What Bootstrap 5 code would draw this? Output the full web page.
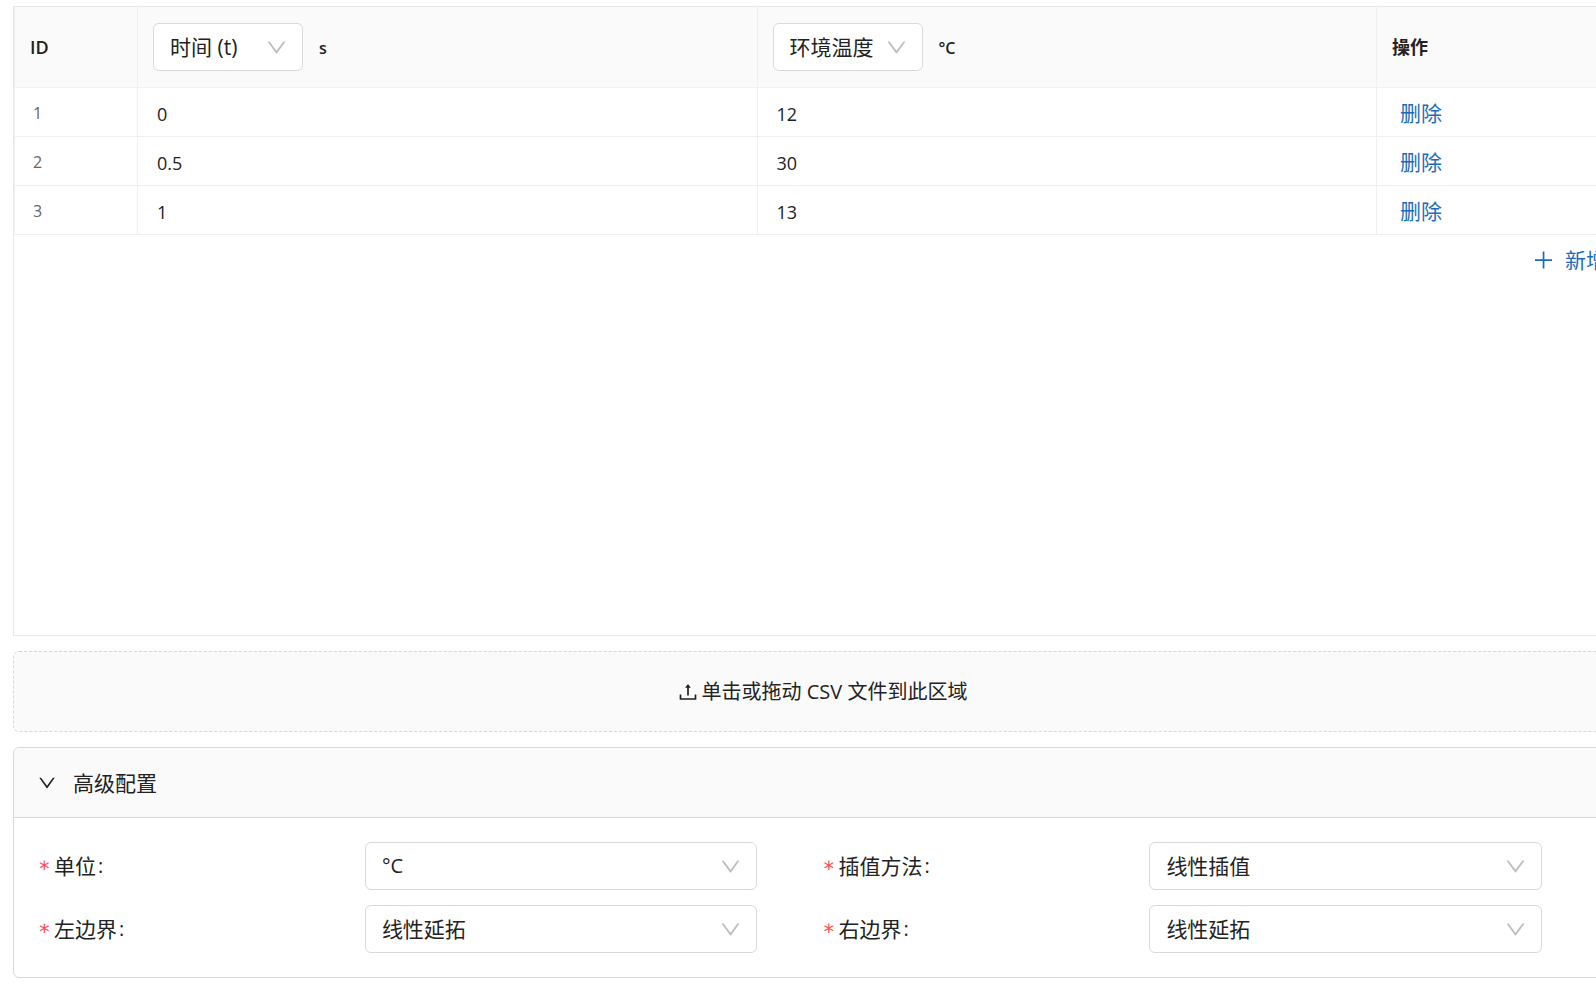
<!DOCTYPE html>
<html lang="zh-CN">
<head>
<meta charset="utf-8">
<meta name="viewport" content="width=device-width, initial-scale=1">
<title>环境温度</title>
<link href="https://cdn.jsdelivr.net/npm/bootstrap@5.3.0/dist/css/bootstrap.min.css" rel="stylesheet">
<style>
  :root { --line: #f0f0f0; --edge: #d9d9d9; --soft: #fafafa; --ink: #222; --link: #1a6bbd; }
  body { font-family: "Open Sans", "Noto Sans CJK SC", sans-serif; font-size: 18px; line-height: 28px; color: var(--ink); background: #fff; }
  /* the editor is wider than its pane, which clips its right edge */
  .pane { overflow: hidden; padding: 6px 0 11px 13px; }
  .editor { margin-right: -36px; display: flex; flex-direction: column; gap: 15px; }
  .sheet { border: 1px solid #e8e8e8; min-height: 630px; }
  .grid-table { width: 100%; table-layout: fixed; border-collapse: separate; border-spacing: 0; border-left: 1px solid var(--line); }
  .grid-table th, .grid-table td { border-right: 1px solid var(--line); border-bottom: 1px solid var(--line); }
  .grid-table th { height: 81px; padding: 0 15px; background: var(--soft); font-weight: 600; }
  .grid-table td { height: 49px; padding: 3px 19px 0; }
  .grid-table td.row-id { color: #666; font-size: 16px; padding: 2px 18px 0; }
  .grid-table td.ops { padding: 2px 23px 0; }
  .col-id { width: 123px; }
  .col-ops { width: 254px; }
  .unit { font-size: 16px; padding-top: 2px; }
  .text-action { border: 0; background: none; padding: 0; color: var(--link); font-size: 21px; }
  .add-row { padding: 11px 24px 0; }
  .picker { height: 48px; padding: 0 40px 0 16px; border: 1px solid var(--edge); border-radius: 6px; color: var(--ink); font-size: 21px; line-height: 30px;
    background-color: #fff; background-position: right 15px center; background-size: 21px 21px;
    background-image: url("data:image/svg+xml,%3Csvg xmlns='http://www.w3.org/2000/svg' viewBox='64 64 896 896'%3E%3Cpath fill='%23bfbfbf' d='M884 256h-75c-5.1 0-9.9 2.5-12.9 6.6L512 654.2 227.9 262.6c-3-4.1-7.8-6.6-12.9-6.6h-75c-6.5 0-10.3 7.4-6.5 12.7l352.6 486.1c12.8 17.6 39 17.6 51.7 0l352.6-486.1c3.9-5.3.1-12.7-6.4-12.7z'/%3E%3C/svg%3E"); }
  .picker-head { width: 150px; font-weight: 400; }
  .picker-latin { font-size: 20px; }
  .drop-zone { height: 81px; border: 1px dashed var(--edge); border-radius: 6px; background: var(--soft); color: var(--ink); font-size: 20px; }
  .settings { border: 1px solid var(--edge); border-radius: 6px; overflow: hidden; }
  .settings-head { height: 70px; padding: 0 24px; border: 0; border-bottom: 1px solid var(--edge); background: var(--soft); color: var(--ink); font-size: 21px; gap: 17px; }
  .settings-body { padding: 24px; row-gap: 15px; }
  .field-label { display: flex; align-items: center; font-size: 21px; }
  .field-label::before { content: "∗"; width: 16px; color: #ff4d4f; font-family: "DejaVu Sans Mono", monospace; font-size: 21px; line-height: 24px; padding-bottom: 2px; }
  .colon { padding-left: 2px; font-size: 20px; }
</style>
</head>
<body>
<main class="pane">
  <div class="editor">
    <section class="sheet">
      <table class="grid-table">
        <colgroup><col class="col-id"><col><col><col class="col-ops"></colgroup>
        <thead>
          <tr>
            <th scope="col">ID</th>
            <th scope="col">
              <div class="d-flex align-items-center gap-3">
                <select class="form-select picker picker-head" aria-label="第一列"><option>时间 (t)</option></select>
                <span class="unit">s</span>
              </div>
            </th>
            <th scope="col">
              <div class="d-flex align-items-center gap-3">
                <select class="form-select picker picker-head" aria-label="第二列"><option>环境温度</option></select>
                <span class="unit">°C</span>
              </div>
            </th>
            <th scope="col">操作</th>
          </tr>
        </thead>
        <tbody>
          <tr><td class="row-id">1</td><td>0</td><td>12</td><td class="ops"><button type="button" class="text-action">删除</button></td></tr>
          <tr><td class="row-id">2</td><td>0.5</td><td>30</td><td class="ops"><button type="button" class="text-action">删除</button></td></tr>
          <tr><td class="row-id">3</td><td>1</td><td>13</td><td class="ops"><button type="button" class="text-action">删除</button></td></tr>
        </tbody>
      </table>
      <div class="add-row d-flex justify-content-end">
        <button type="button" class="text-action d-flex align-items-center gap-2">
          <svg width="26" height="21" viewBox="0 0 26 21" fill="currentColor" aria-hidden="true"><path d="M4 9.2h17v1.7H4zM11.7 1.5h1.7v17h-1.7z"/></svg>
          新增
        </button>
      </div>
    </section>

    <button type="button" class="drop-zone d-flex align-items-center justify-content-center gap-1">
      <svg width="20" height="20" viewBox="64 64 896 896" fill="currentColor" aria-hidden="true"><path d="M400 317.7h73.9V656c0 4.4 3.6 8 8 8h60c4.4 0 8-3.6 8-8V317.7H624c6.7 0 10.4-7.7 6.3-12.9L518.3 163a8 8 0 00-12.6 0l-112 141.7c-4.1 5.3-.4 13 6.3 13zM878 626h-60c-4.4 0-8 3.6-8 8v154H214V634c0-4.4-3.6-8-8-8h-60c-4.4 0-8 3.6-8 8v198c0 17.7 14.3 32 32 32h684c17.7 0 32-14.3 32-32V634c0-4.4-3.6-8-8-8z"/></svg>
      <span>单击或拖动 CSV 文件到此区域</span>
    </button>

    <section class="settings">
      <button type="button" class="settings-head w-100 d-flex align-items-center" data-bs-toggle="collapse" data-bs-target="#advanced" aria-expanded="true" aria-controls="advanced">
        <svg width="18" height="18" viewBox="64 64 896 896" fill="currentColor" aria-hidden="true"><path d="M884 256h-75c-5.1 0-9.9 2.5-12.9 6.6L512 654.2 227.9 262.6c-3-4.1-7.8-6.6-12.9-6.6h-75c-6.5 0-10.3 7.4-6.5 12.7l352.6 486.1c12.8 17.6 39 17.6 51.7 0l352.6-486.1c3.9-5.3.1-12.7-6.4-12.7z"/></svg>
        高级配置
      </button>
      <div class="collapse show" id="advanced">
        <form class="row g-0 settings-body">
          <div class="col-6"><div class="row g-0 align-items-center">
            <label class="col-5 field-label" for="unit">单位<span class="colon">:</span></label>
            <div class="col-6"><select class="form-select picker picker-latin" id="unit"><option>°C</option></select></div>
          </div></div>
          <div class="col-6"><div class="row g-0 align-items-center">
            <label class="col-5 field-label" for="method">插值方法<span class="colon">:</span></label>
            <div class="col-6"><select class="form-select picker" id="method"><option>线性插值</option></select></div>
          </div></div>
          <div class="col-6"><div class="row g-0 align-items-center">
            <label class="col-5 field-label" for="left">左边界<span class="colon">:</span></label>
            <div class="col-6"><select class="form-select picker" id="left"><option>线性延拓</option></select></div>
          </div></div>
          <div class="col-6"><div class="row g-0 align-items-center">
            <label class="col-5 field-label" for="right">右边界<span class="colon">:</span></label>
            <div class="col-6"><select class="form-select picker" id="right"><option>线性延拓</option></select></div>
          </div></div>
        </form>
      </div>
    </section>
  </div>
</main>
<script src="https://cdn.jsdelivr.net/npm/bootstrap@5.3.0/dist/js/bootstrap.bundle.min.js"></script>
</body>
</html>
